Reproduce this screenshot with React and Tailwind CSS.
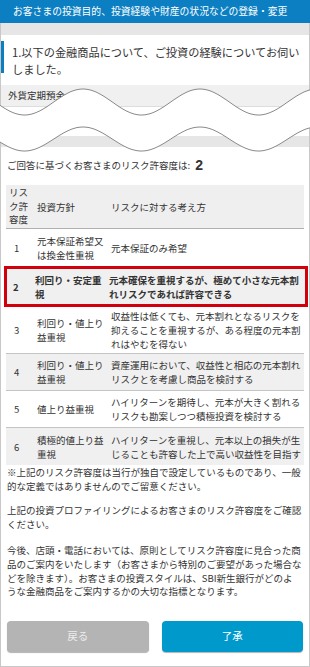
import React from "react";

const FONT = { fontFamily: '"Noto Sans CJK JP", "Noto Sans", sans-serif' };

function wavePts(cy, amp, crestX, period) {
  const pts = [];
  for (let x = -4; x <= 314; x += 2) {
    const y = cy - amp * Math.cos((2 * Math.PI * (x - crestX)) / period);
    pts.push([x, y]);
  }
  return pts;
}

function Waves() {
  const up = wavePts(22, 13, 83, 117);
  const lo = wavePts(59, 12, 83, 117);
  const toD = (p) => p.map((q, i) => (i === 0 ? "M" : "L") + q[0].toFixed(1) + " " + q[1].toFixed(1)).join(" ");
  const fill = toD(up) + " " + [...lo].reverse().map((q) => "L" + q[0].toFixed(1) + " " + q[1].toFixed(1)).join(" ") + " Z";
  return (
    <svg className="absolute left-0 top-[80px]" width="310" height="80" viewBox="0 0 310 80">
      <path d={fill} fill="#ffffff" />
      <path d={toD(up)} fill="none" stroke="#8a8a8a" strokeWidth="1" />
      <path d={toD(lo)} fill="none" stroke="#8a8a8a" strokeWidth="1" />
    </svg>
  );
}

const rows = [
  { n: "1", p: "元本保証希望又は換金性重視", r: "元本保証のみ希望", bg: "bg-white" },
  { n: "3", p: "利回り・値上り益重視", r: "収益性は低くても、元本割れとなるリスクを抑えることを重視するが、ある程度の元本割れはやむを得ない", bg: "bg-white" },
  { n: "4", p: "利回り・値上り益重視", r: "資産運用において、収益性と相応の元本割れリスクとを考慮し商品を検討する", bg: "bg-[#f0f0f0]" },
  { n: "5", p: "値上り益重視", r: "ハイリターンを期待し、元本が大きく割れるリスクも勘案しつつ積極投資を検討する", bg: "bg-white" },
  { n: "6", p: "積極的値上り益重視", r: "ハイリターンを重視し、元本以上の損失が生じることも許容した上で高い収益性を目指す", bg: "bg-[#f0f0f0]" },
];

function Row({ d, last }) {
  return (
    <div className={`flex items-center min-h-[37px] py-[2px] ${d.bg} ${last ? "" : "border-b border-[#c4c4c4]"}`}>
      <div className="w-[31px] shrink-0 pl-[8px]">{d.n}</div>
      <div className="w-[74px] shrink-0 pr-[3px]">{d.p}</div>
      <div className="flex-1">{d.r}</div>
    </div>
  );
}

export default function App() {
  return (
    <div className="relative w-[310px] h-[667px] overflow-hidden bg-white text-[#333]" style={FONT}>
      <div className="h-[23px] bg-[#0c7fc2] text-white text-[9.8px] leading-[23px] pl-[13px] whitespace-nowrap">
        お客さまの投資目的、投資経験や財産の状況などの登録・変更
      </div>
      <div className="h-[644px] border-x border-b border-[#c8c8c8] flex flex-col">
        <div className="h-[12px] bg-[#e6e6e6] shrink-0" />
        <div className="flex mt-[6px]">
          <div className="w-[3px] h-[32px] bg-[#0c7fc2] shrink-0" />
          <div className="pl-[8px] pr-[6px] pt-[3px] text-[11.2px] leading-[17px]">
            1.以下の金融商品について、ご投資の経験についてお伺いしました。
          </div>
        </div>
        <div className="mt-[7px] h-[22px] bg-[#f0f0f0] border-b border-[#dddddd] flex items-center pl-[7px] text-[9.5px] shrink-0">
          外貨定期預金
        </div>
        <div className="h-[29px] shrink-0" />
        <div className="h-[11px] bg-[#e6e6e6] shrink-0" />
        <div className="mt-[8px] px-[6px] text-[9.5px] leading-[20px] flex items-center">
          ご回答に基づくお客さまのリスク許容度は:
          <span className="ml-[5px] text-[14px] font-bold" style={{ fontFamily: '"Liberation Sans", Arial, sans-serif' }}>2</span>
        </div>
        <div className="mt-[10px] mx-[5px] text-[9.5px] leading-[14px]">
          <div className="flex items-center h-[44px] bg-[#efefef] border-b border-[#b0b0b0]">
            <div className="w-[31px] shrink-0 pl-[3px] pr-[6px] leading-[13.4px]">リスク許容度</div>
            <div className="w-[74px] shrink-0">投資方針</div>
            <div className="flex-1">リスクに対する考え方</div>
          </div>
          <Row d={rows[0]} last />
          <div className="-ml-[2px] -mr-[4px] border-[3px] border-[#d0000d] bg-[#f0f0f0] flex items-center min-h-[41px] font-bold">
            <div className="w-[28px] shrink-0 pl-[6px]">2</div>
            <div className="w-[74px] shrink-0 pr-[3px]">利回り・安定重視</div>
            <div className="flex-1 pr-[1px]">元本確保を重視するが、極めて小さな元本割れリスクであれば許容できる</div>
          </div>
          {rows.slice(1).map((d, i) => (
            <Row key={d.n} d={d} last={i === 3} />
          ))}
        </div>
        <div className="px-[6px] text-[9.5px] leading-[13.6px]">
          <p className="mt-[1px]">※上記のリスク許容度は当行が独自で設定しているものであり、一般的な定義ではありませんのでご留意ください。</p>
          <p className="mt-[11px]">上記の投資プロファイリングによるお客さまのリスク許容度をご確認ください。</p>
          <p className="mt-[13px]">
            今後、店頭・電話においては、原則としてリスク許容度に見合った商<br />
            品のご案内をいたします（お客さまから特別のご要望があった場合な<br />
            どを除きます）。お客さまの投資スタイルは、SBI新生銀行がどのよ<br />
            うな金融商品をご案内するかの大切な指標となります。
          </p>
        </div>
        <div className="mt-[22px] px-[6px] flex gap-[13px]">
          <div className="flex-1 h-[31px] rounded-[4px] bg-[#b4b4b4] shadow-[0_1px_1px_rgba(0,0,0,0.3)] flex items-center justify-center text-[#ececec] text-[10.5px]">
            戻る
          </div>
          <div className="flex-1 h-[31px] rounded-[4px] bg-[#0099cc] shadow-[0_1px_1px_rgba(0,0,0,0.3)] flex items-center justify-center text-white text-[10.5px]">
            了承
          </div>
        </div>
      </div>
      <Waves />
    </div>
  );
}
